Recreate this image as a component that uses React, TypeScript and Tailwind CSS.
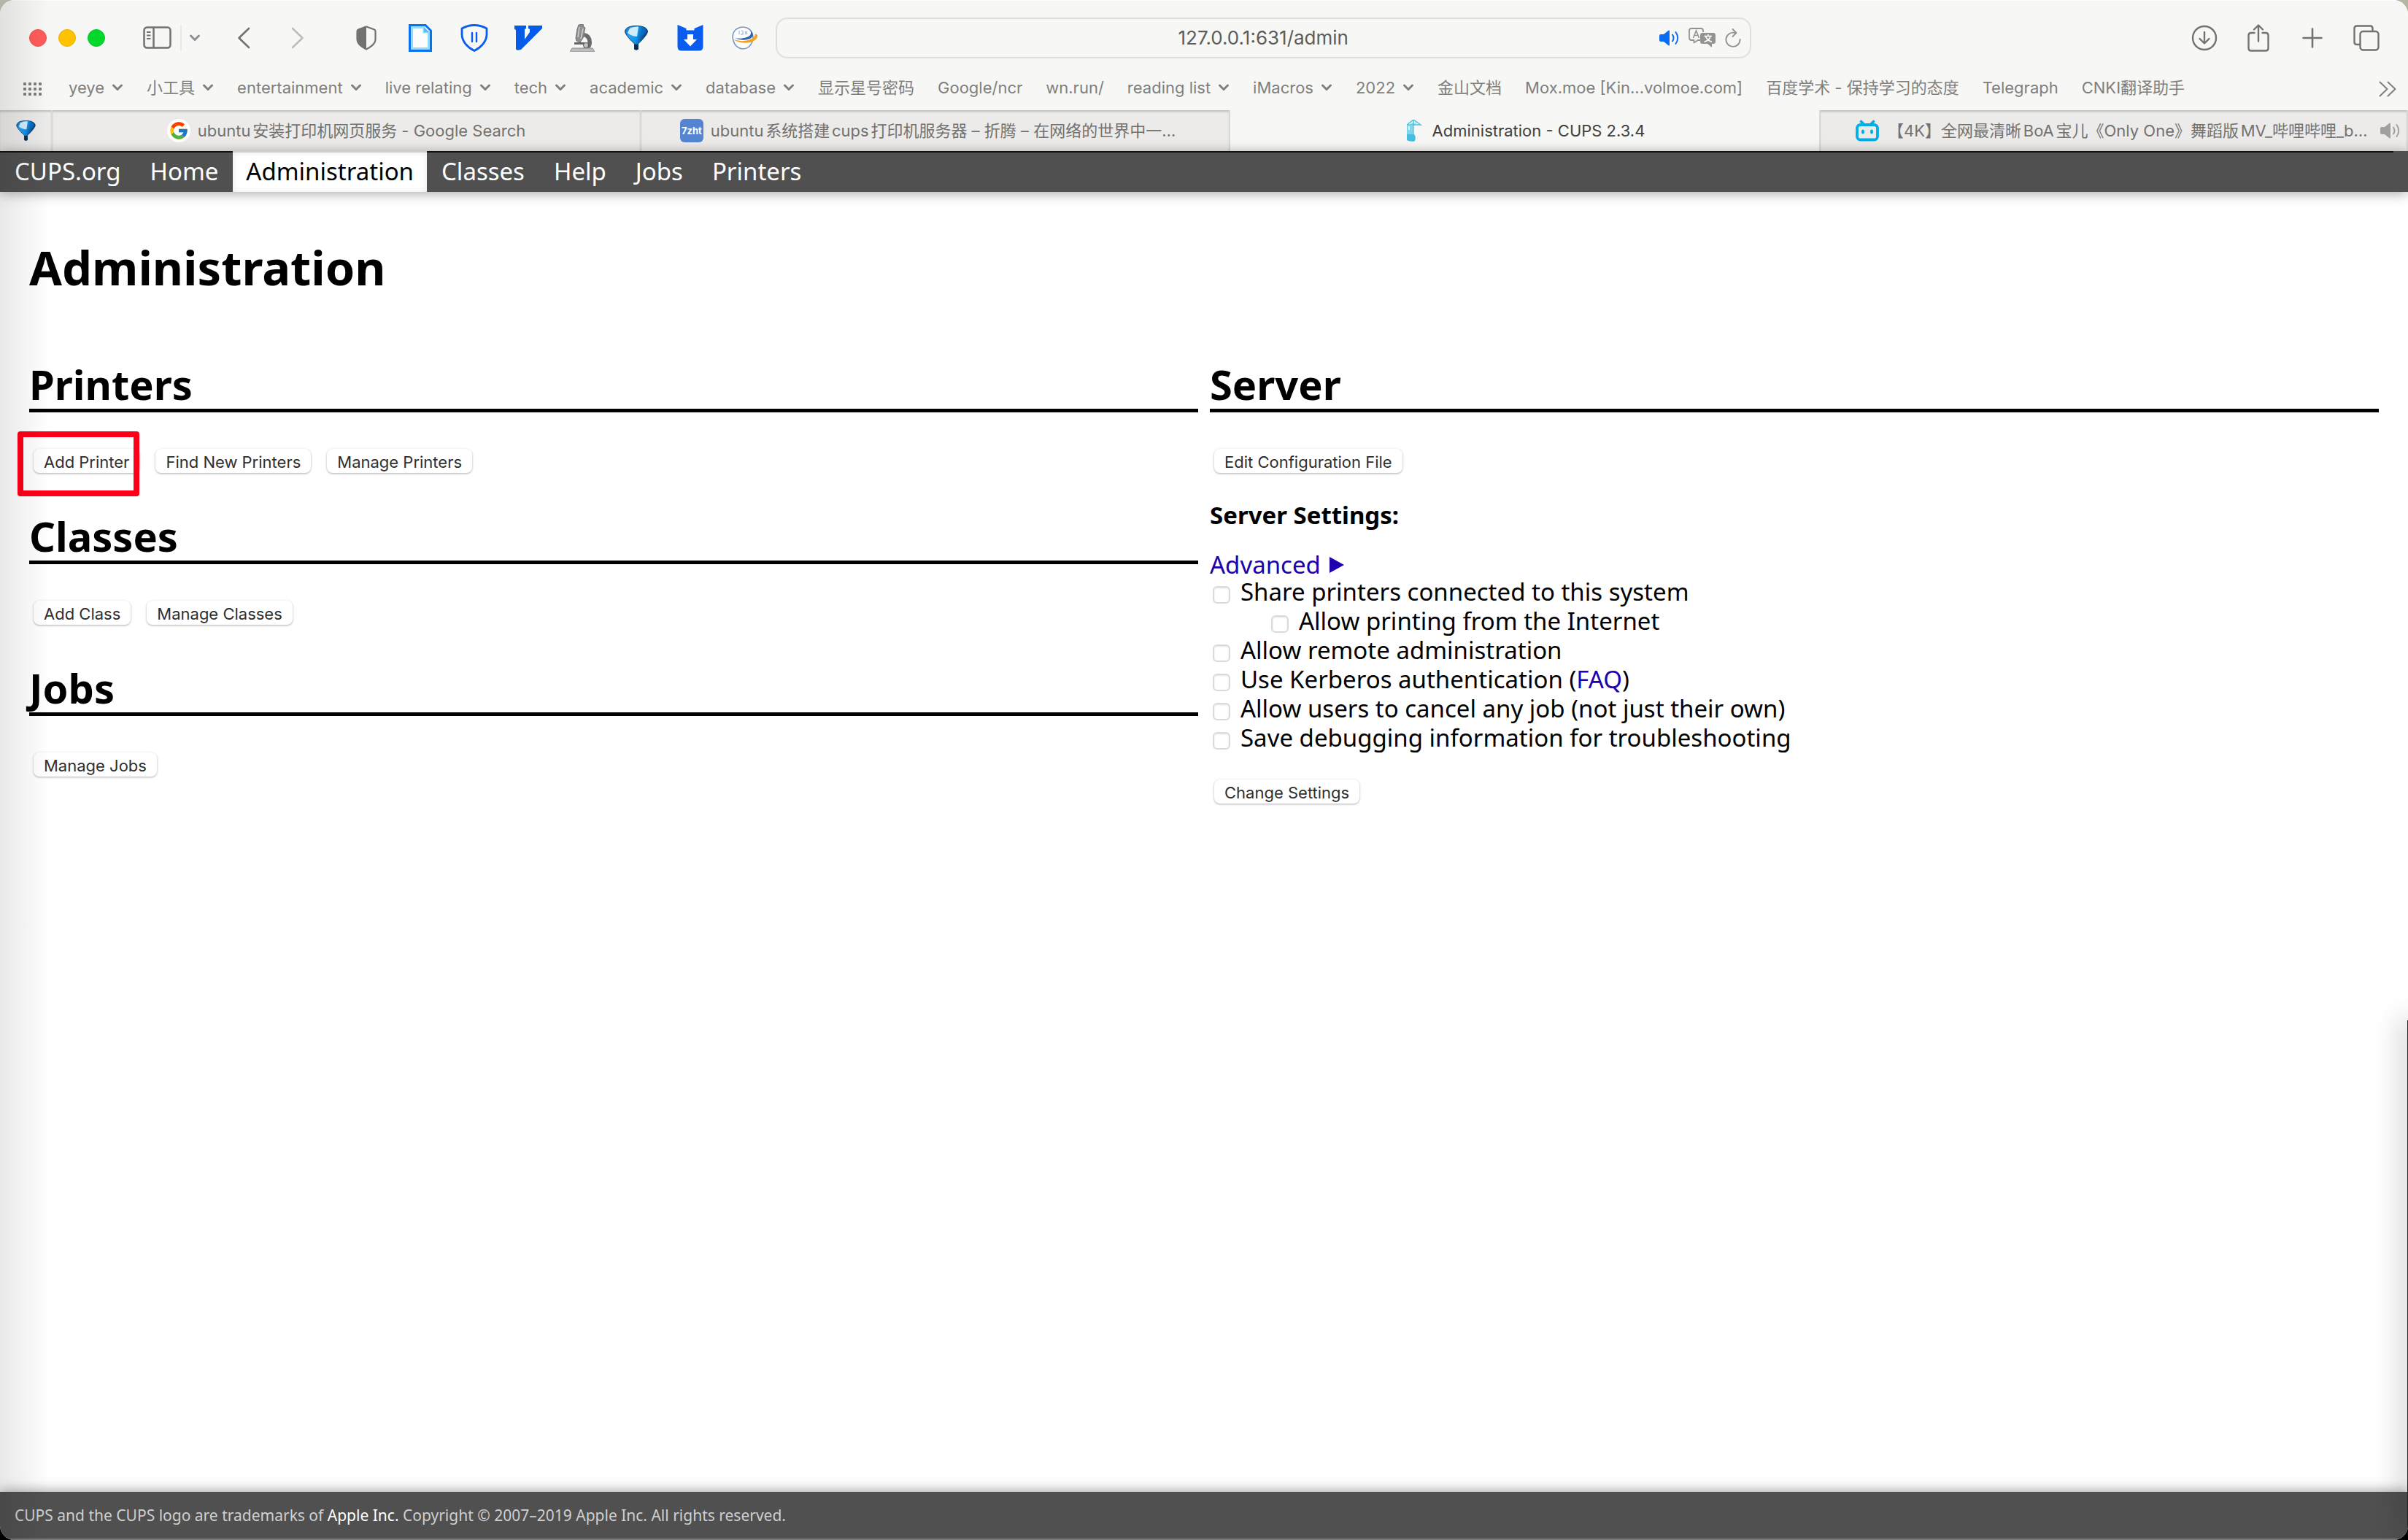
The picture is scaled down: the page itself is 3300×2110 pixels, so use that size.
import React from "react";
import { FcGoogle } from "react-icons/fc";

const ui = "font-['Inter','Noto_Sans_CJK_SC',sans-serif]";

function Chevron() {
  return (
    <svg width="16" height="10" viewBox="0 0 16 10" fill="none" stroke="currentColor" strokeWidth="3" strokeLinecap="round" strokeLinejoin="round" aria-hidden="true">
      <path d="M2.500 2 8 7.500 13.500 2" />
    </svg>
  );
}

function Funnel({ id, width = 32, height = 34 }: { id: string; width?: number; height?: number }) {
  return (
    <svg width={width} height={height} viewBox="0 0 32 34" aria-hidden="true">
      <defs>
        <linearGradient id={id} x1="0" x2="1" y1="0" y2="0.3">
          <stop offset="0" stopColor="#0a5fb0" />
          <stop offset="0.25" stopColor="#29a3f2" />
          <stop offset="0.6" stopColor="#1191ee" />
          <stop offset="1" stopColor="#03305f" />
        </linearGradient>
      </defs>
      <path d="M0.500 8C0.500 12 9 21 13.500 25V32.500Q16 34 18.500 32.500V25C23 21 31.500 12 31.500 8C31 3 25 .5 16 .5S1 3 .5 8Z" fill={`url(#${id})`} stroke="#08406f" strokeWidth="1" />
      <path d="M7 4Q12 1 19 1.500L17 15Q10 15 4 10Z" fill="#e4f5ff" opacity="0.9" />
      <path d="M24 2.500Q30 4 30.500 8Q28 13 21 15Z" fill="#0a6fc4" opacity="0.7" />
      <path d="M13.500 25V32.500Q16 34 18.500 32.500V25L16 26Z" fill="#0b2c4c" />
    </svg>
  );
}

function Speaker({ className }: { className: string }) {
  return (
    <svg className={className} width="28" height="22" viewBox="0 0 28 22" fill="none" aria-hidden="true">
      <path d="M2 6H6L12.500 .8Q14 0 14 1.500V20.500Q14 22 12.500 21.200L6 16H2Q0 16 0 14V8Q0 6 2 6Z" fill="currentColor" />
      <path d="M18 6.500Q21 11 18 15.500M22.500 3Q28 11 22.500 19" stroke="currentColor" strokeWidth="2" strokeLinecap="round" />
    </svg>
  );
}

function IconButton({ label, children, className = "" }: { label: string; children: React.ReactNode; className?: string }) {
  return (
    <button type="button" aria-label={label} className={`flex h-10 shrink-0 items-center justify-center ${className}`}>
      {children}
    </button>
  );
}

const extensions: { label: string; icon: React.ReactNode }[] = [
  {
    label: "Privacy report",
    icon: (
      <svg width="28" height="34" viewBox="0 0 28 34" fill="none">
        <path d="M14 1.500 25 5.500Q26.500 6 26.500 8V19C26.500 25 20 29.500 14 32.500C8 29.500 1.500 25 1.500 19V8Q1.500 6 3 5.500Z" stroke="#72726f" strokeWidth="2.200" />
        <path d="M14 1.500V32.500C8 29.500 1.500 25 1.500 19V8Q1.500 6 3 5.500Z" fill="#72726f" />
      </svg>
    ),
  },
  {
    label: "Document",
    icon: (
      <svg width="32" height="38" viewBox="0 0 32 38">
        <path d="M1.500 1.500H23L30.500 9V36.500H1.500Z" fill="#f7fbff" stroke="#0a72f0" strokeWidth="3" />
        <path d="M4.500 4.500H21V11H27.500V33.500H4.500Z" fill="#fbfdff" stroke="#8fdcff" strokeWidth="3" />
        <path d="M21 4 28 11H21Z" fill="#5ab8fb" />
      </svg>
    ),
  },
  {
    label: "Blocker",
    icon: (
      <svg width="38" height="38" viewBox="0 0 38 38" fill="none" stroke="#0a5cf0" strokeLinecap="round">
        <path d="M19 1.500Q28 1.500 36 6V14C36 24 28 32 19 36.500C10 32 2 24 2 14V6Q10 1.500 19 1.500Z" strokeWidth="2.800" strokeLinejoin="round" />
        <path d="M16 12V24M22 12V24" strokeWidth="2.400" />
      </svg>
    ),
  },
  {
    label: "Vimari",
    icon: (
      <svg width="38" height="34" viewBox="0 0 38 34">
        <path d="M0 0H16V4L14 5V19L21 9V5L19 4V0H38V4L9 33Q2 35 2 32V6L0 5Z" fill="#045be8" />
      </svg>
    ),
  },
  {
    label: "Microscope",
    icon: (
      <svg width="34" height="38" viewBox="0 0 34 38">
        <path d="M12 1 18 0 19 4 21 5 18 19 14 25 9 23 8 19 10 7Z" fill="#8f8f8f" stroke="#6f6f6f" />
        <path d="M13 4 11 18M18 6 15 20" stroke="#cfcfcf" strokeWidth="1.500" />
        <path d="M20 12Q30 14 30 25Q30 30 27 33H18L24 28Q26 20 19 17Z" fill="#6a6a6a" />
        <path d="M6 25H20V28H6Z" fill="#666" />
        <circle cx="22" cy="29" r="3.500" fill="#c4c4c4" stroke="#555" />
        <path d="M3 33H31L34 38H0Z" fill="#bdbdbd" stroke="#8a8a8a" />
      </svg>
    ),
  },
  { label: "Filter", icon: <Funnel id="funnel-toolbar" /> },
  {
    label: "Save",
    icon: (
      <svg width="36" height="36" viewBox="0 0 36 36">
        <path d="M.5 0 12.500 5V7.500H23.500V5L35.500 0V30Q35.500 35.500 30 35.500H6Q.5 35.500 .5 30Z" fill="#0a5cf0" />
        <path d="M14 13H22V20H27L18 29.500 9 20H14Z" fill="#fff" />
      </svg>
    ),
  },
  {
    label: "Globe",
    icon: (
      <svg width="38" height="34" viewBox="0 0 38 34" fill="none">
        <path d="M8 5Q17 -1 26 5Q33 12 30 22Q26 32 17 32Q7 31 4 21Q1 11 8 5Z" fill="#fdfdfd" stroke="#7795bf" strokeWidth="1.600" />
        <path d="M28 7Q34 14 27 18Q18 22 6 17Q17 19 25 15Q30 12 27 6Z" fill="#2b62ae" />
        <path d="M37 13Q38 19 28 23Q14 26 2 18Q12 23 25 20Q34 17 34 11Z" fill="#f5a21c" />
        <path d="M12 7V12M15 7Q18 7 17 12H14M20 8 23 12M23 8 20 12" stroke="#a9c0e2" strokeWidth="1.300" />
      </svg>
    ),
  },
];

const bookmarks: { label: string; menu?: boolean }[] = [
  { label: "yeye", menu: true },
  { label: "小工具", menu: true },
  { label: "entertainment", menu: true },
  { label: "live relating", menu: true },
  { label: "tech", menu: true },
  { label: "academic", menu: true },
  { label: "database", menu: true },
  { label: "显示星号密码" },
  { label: "Google/ncr" },
  { label: "wn.run/" },
  { label: "reading list", menu: true },
  { label: "iMacros", menu: true },
  { label: "2022", menu: true },
  { label: "金山文档" },
  { label: "Mox.moe [Kin...volmoe.com]" },
  { label: "百度学术 - 保持学习的态度" },
  { label: "Telegraph" },
  { label: "CNKI翻译助手" },
];

function Toolbar() {
  return (
    <div className="flex h-[101px] items-center text-[#72726f]">
      <div className="flex gap-4 pl-10">
        <button type="button" aria-label="Close" className="size-6 rounded-full border border-[#ee4d4b] bg-[#ff5c5a]" />
        <button type="button" aria-label="Minimise" className="size-6 rounded-full border border-[#eab000] bg-[#ffc200]" />
        <button type="button" aria-label="Zoom" className="size-6 rounded-full border border-[#06c427] bg-[#04d72c]" />
      </div>
      <IconButton label="Show sidebar" className="ml-13">
        <svg width="39" height="31" viewBox="0 0 39 31" fill="none" stroke="currentColor" strokeWidth="2.500">
          <rect x="1.500" y="1.500" width="36" height="28" rx="4" />
          <path d="M14.500 1.500V29.500" />
          <path d="M5 8H10.500M5 12.500H10.500M5 17H10.500" strokeWidth="1.800" />
        </svg>
      </IconButton>
      <div className="ml-3 h-9 w-0.5 bg-[#e9e9e7]" />
      <IconButton label="Tab groups" className="ml-2.5 text-[#8e8e93]">
        <Chevron />
      </IconButton>
      <IconButton label="Back" className="ml-[50px]">
        <svg width="18" height="30" viewBox="0 0 18 30" fill="none" stroke="currentColor" strokeWidth="2.600" strokeLinecap="round" strokeLinejoin="round">
          <path d="M16 2 2.500 15 16 28" />
        </svg>
      </IconButton>
      <IconButton label="Forward" className="ml-14 text-[#bdbdbb]">
        <svg width="18" height="30" viewBox="0 0 18 30" fill="none" stroke="currentColor" strokeWidth="2.600" strokeLinecap="round" strokeLinejoin="round">
          <path d="M2 2 15.500 15 2 28" />
        </svg>
      </IconButton>
      <div className="ml-[66px] flex gap-9">
        {extensions.map((e) => (
          <IconButton key={e.label} label={e.label} className="w-[38px]">
            {e.icon}
          </IconButton>
        ))}
      </div>
      <div className="ml-6 flex h-14 w-[40.5%] shrink-0 items-center rounded-2xl border-2 border-[#dfdfdd] px-3 focus-within:border-[#8ab4f8]">
        <div className="w-28 shrink-0" />
        <input
          aria-label="Address"
          defaultValue="127.0.0.1:631/admin"
          className="min-w-0 flex-1 bg-transparent text-center text-[26px] leading-8 text-[#5c5c5a] outline-none"
        />
        <div className="flex shrink-0 items-center gap-3 text-[#939391]">
          <button type="button" aria-label="Mute this tab">
            <Speaker className="text-[#0a6cf5]" />
          </button>
          <button type="button" aria-label="Translate">
            <svg width="38" height="28" viewBox="0 0 38 28" fill="none">
              <path d="M17 17H13L7.500 20.500V17H4Q1 17 1 14V4Q1 1 4 1H17Q20 1 20 4V6" stroke="currentColor" strokeWidth="1.800" strokeLinejoin="round" />
              <path d="M6.500 14 10.500 4 14.500 14M8 10.500H13" stroke="currentColor" strokeWidth="1.600" />
              <path d="M19 7H34Q37 7 37 10V19Q37 22 34 22H32V27L26 22H19Q16 22 16 19V10Q16 7 19 7Z" fill="currentColor" />
              <path d="M21.500 11.500H32M26.800 9V11.500M30 11.500Q29 17 21.500 19.500M23.500 11.500Q25 17 32 19.500" stroke="#fff" strokeWidth="1.600" />
            </svg>
          </button>
          <button type="button" aria-label="Reload">
            <svg width="22" height="26" viewBox="0 0 22 26" fill="none" stroke="currentColor" strokeWidth="1.900" strokeLinecap="round" strokeLinejoin="round">
              <path d="M13.500 6A9.600 9.600 0 1 0 20.600 15" />
              <path d="M10.500 1 15.500 6 10.500 11" />
            </svg>
          </button>
        </div>
      </div>
      <div className="ml-auto flex gap-9 pr-[38px]">
        <IconButton label="Downloads" className="w-[38px]">
          <svg width="36" height="36" viewBox="0 0 36 36" fill="none" stroke="currentColor" strokeWidth="2.400" strokeLinecap="round" strokeLinejoin="round">
            <circle cx="18" cy="18" r="16" />
            <path d="M18 10V25M11.500 19 18 25.500 24.500 19" />
          </svg>
        </IconButton>
        <IconButton label="Share" className="w-[38px]">
          <svg width="30" height="38" viewBox="0 0 30 38" fill="none" stroke="currentColor" strokeWidth="2.400" strokeLinecap="round" strokeLinejoin="round">
            <path d="M9.500 12H5Q1.500 12 1.500 15.500V33Q1.500 36.500 5 36.500H25Q28.500 36.500 28.500 33V15.500Q28.500 12 25 12H20.500" />
            <path d="M15 23.500V2M9 7.500 15 1.500 21 7.500" />
          </svg>
        </IconButton>
        <IconButton label="New tab" className="w-[38px]">
          <svg width="28" height="28" viewBox="0 0 28 28" fill="none" stroke="currentColor" strokeWidth="2.600" strokeLinecap="round">
            <path d="M14 1.500V26.500M1.500 14H26.500" />
          </svg>
        </IconButton>
        <IconButton label="Tab overview" className="w-[38px]">
          <svg width="36" height="36" viewBox="0 0 36 36" fill="none" stroke="currentColor" strokeWidth="2.400" strokeLinejoin="round">
            <path d="M9.500 27H5Q1.500 27 1.500 23.500V5Q1.500 1.500 5 1.500H23Q26.500 1.500 26.500 5V9" />
            <rect x="9.500" y="9" width="25" height="25.500" rx="4" />
          </svg>
        </IconButton>
      </div>
    </div>
  );
}

function Bookmarks() {
  return (
    <div className="flex h-[49px] items-start text-[22px] leading-9 text-[#7f7f7d]">
      <IconButton label="Show favourites" className="mr-9 ml-8 h-9">
        <svg width="26" height="18" viewBox="0 0 26 18" fill="currentColor">
          {[0, 7, 14, 21].map((x) => [0, 7, 14].map((y) => <rect key={`${x}-${y}`} x={x} y={y} width="4" height="4" rx="1" />))}
        </svg>
      </IconButton>
      <nav aria-label="Bookmarks" className="flex min-w-0 flex-1 gap-8 whitespace-nowrap">
        {bookmarks.map((b) =>
          b.menu ? (
            <button key={b.label} type="button" className="flex items-center gap-2.5">
              {b.label}
              <Chevron />
            </button>
          ) : (
            <a key={b.label} href="#bookmark">
              {b.label}
            </a>
          ),
        )}
      </nav>
      <IconButton label="More bookmarks" className="mr-4">
        <svg width="24" height="22" viewBox="0 0 24 22" fill="none" stroke="currentColor" strokeWidth="2" strokeLinecap="round" strokeLinejoin="round">
          <path d="M1.500 1.500 11.500 11 1.500 20.500M12.500 1.500 22.500 11 12.500 20.500" />
        </svg>
      </IconButton>
    </div>
  );
}

const idleTab = "flex min-w-0 items-center border-r-2 border-[#d9d8d7] bg-[#ecebea] shadow-[inset_0_3px_3px_-1px_rgba(0,0,0,0.2)]";

function Tabs() {
  return (
    <div role="tablist" className="grid h-14 grid-cols-[72px_repeat(4,minmax(0,1fr))] text-[22px] leading-8 whitespace-nowrap text-[#727270] [text-autospace:normal]">
      <button type="button" role="tab" aria-selected="false" aria-label="Pinned tab" className={`${idleTab} justify-center`}>
        <Funnel id="funnel-tab" width={27} height={28} />
      </button>
      <button type="button" role="tab" aria-selected="false" className={`${idleTab} justify-center gap-2.5`}>
        <span className="flex size-8 shrink-0 items-center justify-center rounded-full bg-white">
          <FcGoogle size={28} />
        </span>
        <span>ubuntu安装打印机网页服务 - Google Search</span>
      </button>
      <button type="button" role="tab" aria-selected="false" className={`${idleTab} justify-center gap-2.5 pr-5`}>
        <span className="flex size-8 shrink-0 items-center justify-center rounded-md bg-[#5585d2] text-[13px] font-bold text-white">7zht</span>
        <span>ubuntu系统搭建cups打印机服务器 – 折腾 – 在网络的世界中一…</span>
      </button>
      <button type="button" role="tab" aria-selected="true" className="flex min-w-0 items-center justify-center gap-3.5 text-[#3f3f3e]">
        <svg width="24" height="30" viewBox="0 0 24 30" fill="none" aria-hidden="true">
          <path d="M3 7 12 0 22 7H3M12 0V30" stroke="#4fc3dd" strokeWidth="1.500" />
          <path d="M12 1V7M8 4 12 7 16 4" stroke="#4fc3dd" />
          <path d="M3 8H11V20H3Z" fill="#7fd6ea" />
          <path d="M5 9H7V14H5Z" fill="#e7f8fc" />
          <path d="M3 20H13Q16 23 14 29Q8 31 3 28Z" fill="#45bfe0" />
        </svg>
        <span>Administration - CUPS 2.3.4</span>
      </button>
      <button type="button" role="tab" aria-selected="false" className={`${idleTab} border-r-0 border-l-2 pr-2 pl-12`}>
        <svg className="shrink-0" width="32" height="30" viewBox="0 0 32 30" fill="none" stroke="#00aee6" strokeLinecap="round" aria-hidden="true">
          <rect x="2" y="7" width="28" height="20.500" rx="4.500" strokeWidth="3.800" />
          <path d="M7.500 2.500 11 6M24.500 2.500 21 6" strokeWidth="3.600" />
          <path d="M10 15.500V17.500M22 15.500V17.500" strokeWidth="3.800" />
        </svg>
        <span className="ml-3 min-w-0">【4K】全网最清晰BoA宝儿《Only One》舞蹈版MV_哔哩哔哩_b…</span>
        <Speaker className="ml-auto shrink-0 text-[#a0a09f]" />
      </button>
    </div>
  );
}

const links = ["CUPS.org", "Home", "Administration", "Classes", "Help", "Jobs", "Printers"];

function SiteNav() {
  return (
    <nav aria-label="Site" className="relative flex h-14 bg-[#505050] pr-5 text-[33px] leading-[51px] text-white shadow-[0_2px_16px_rgba(0,0,0,0.35)]">
      {links.map((l) => (
        <a
          key={l}
          href="#site"
          className={l === "Administration" ? "border-t-2 border-[#cfcfcd] bg-white px-[18px] text-black shadow-[inset_0_0_10px_rgba(0,0,0,0.08)]" : "border-t-2 border-[#111] px-5"}
        >
          {l}
        </a>
      ))}
      <div className="flex-1 border-t-2 border-[#111]" />
    </nav>
  );
}

function PushButton({ children }: { children: React.ReactNode }) {
  return (
    <button type="button" className={`${ui} h-[33px] rounded-lg bg-white px-3.5 pt-0.5 text-[22px] leading-[33px] whitespace-nowrap text-[#2f2f2f] shadow-[0_1px_3px_rgba(0,0,0,0.32)]`}>
      {children}
    </button>
  );
}

function Section({ title, children }: { title: string; children: React.ReactNode }) {
  return (
    <section>
      <h2 className="border-b-5 border-black pb-[3px] text-[56px] leading-[62px] font-bold">{title}</h2>
      <div className="mt-[50px] flex gap-[22px] pl-1.5">{children}</div>
    </section>
  );
}

function Check({ id, nested, children }: { id: string; nested?: boolean; children: React.ReactNode }) {
  return (
    <div className={`flex items-end gap-3.5 ${nested ? "ml-[84px]" : "ml-1"}`}>
      <input
        id={id}
        type="checkbox"
        className="mb-1 size-6 shrink-0 appearance-none rounded-md border-2 border-[#dadada] bg-white shadow-[inset_0_1px_2px_rgba(0,0,0,0.12)] checked:bg-[#0a6cf5]"
      />
      <label htmlFor={id} className="leading-10">
        {children}
      </label>
    </div>
  );
}

export default function App() {
  return (
    <div className="min-h-screen bg-linear-to-b from-[#b5b5a8] to-black">
      <div className="relative flex min-h-screen flex-col overflow-hidden rounded-[20px] bg-white font-['Noto_Sans','Noto_Sans_CJK_SC',sans-serif] text-[33px] text-black">
        <header className={`${ui} border-t border-white bg-[#f7f7f5]`}>
          <Toolbar />
          <Bookmarks />
          <Tabs />
        </header>
        <SiteNav />
        <main className="flex-1 px-10 pt-[65px]">
          <h1 className="text-[65px] leading-[76px] font-bold">Administration</h1>
          <div className="mt-[91px] grid grid-cols-2 gap-4">
            <div className="flex flex-col gap-[55px]">
              <Section title="Printers">
                <div className="relative flex">
                  <PushButton>Add Printer</PushButton>
                  <div className="pointer-events-none absolute -top-6 right-0 -bottom-8 -left-[22px] rounded-sm border-8 border-[#ff0019]" />
                </div>
                <PushButton>Find New Printers</PushButton>
                <PushButton>Manage Printers</PushButton>
              </Section>
              <Section title="Classes">
                <PushButton>Add Class</PushButton>
                <PushButton>Manage Classes</PushButton>
              </Section>
              <Section title="Jobs">
                <PushButton>Manage Jobs</PushButton>
              </Section>
            </div>
            <div>
              <Section title="Server">
                <PushButton>Edit Configuration File</PushButton>
              </Section>
              <h3 className="mt-[38px] leading-10 font-bold">Server Settings:</h3>
              <a href="#advanced" className="mt-[31px] flex items-center gap-3 leading-[34px] text-[#2100ad]">
                Advanced
                <svg width="20" height="22" viewBox="0 0 20 22" fill="currentColor" aria-hidden="true">
                  <path d="M0 0 20 11 0 22Z" />
                </svg>
              </a>
              <Check id="share">Share printers connected to this system</Check>
              <Check id="internet" nested>
                Allow printing from the Internet
              </Check>
              <Check id="remote">Allow remote administration</Check>
              <Check id="kerberos">
                Use Kerberos authentication (
                <a href="#faq" className="text-[#2100ad]">
                  FAQ
                </a>
                )
              </Check>
              <Check id="cancel">Allow users to cancel any job (not just their own)</Check>
              <Check id="debug">Save debugging information for troubleshooting</Check>
              <div className="mt-[37px] flex pl-1.5">
                <PushButton>Change Settings</PushButton>
              </div>
            </div>
          </div>
        </main>
        <footer className="relative border-b-2 border-[#7c7c7c] bg-[#505050] px-5 py-4 text-[21px] leading-8 text-[#cfcfcf] shadow-[0_-2px_16px_rgba(0,0,0,0.35)]">
          CUPS and the CUPS logo are trademarks of{" "}
          <a href="#apple" className="text-white">
            Apple Inc.
          </a>{" "}
          Copyright © 2007–2019 Apple Inc. All rights reserved.
        </footer>
        <div className="pointer-events-none absolute inset-y-0 left-0 w-17 bg-linear-to-r from-black/9 to-transparent" />
        <div className="pointer-events-none absolute right-0 bottom-4 h-[33%] w-px bg-[#222] shadow-[0_0_36px_4px_rgba(0,0,0,0.45)]" />
      </div>
    </div>
  );
}
